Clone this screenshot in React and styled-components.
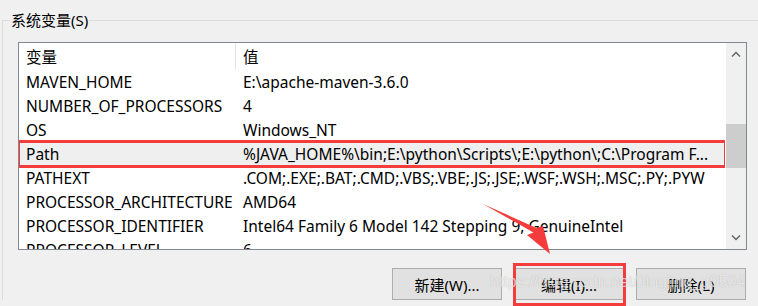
import React from 'react';
import styled, { createGlobalStyle } from 'styled-components';

const GlobalStyle = createGlobalStyle`
  html, body {
    margin: 0;
    padding: 0;
    background: #f0f0f0;
  }
  body {
    font-family: "Noto Sans", "Noto Sans CJK SC", sans-serif;
    color: #000;
  }
`;

const Window = styled.div`
  position: relative;
  width: 758px;
  height: 306px;
  overflow: hidden;
  background: #f0f0f0;
`;

const Group = styled.fieldset`
  margin: 10px 0 0 2px;
  width: 800px;
  padding: 0 0 0 15px;
  border: 1px solid #dcdcdc;
  border-bottom: none;
  box-sizing: border-box;

  legend {
    margin-left: -8px;
    padding: 0 1px;
    font-size: 15px;
    line-height: 20px;
    color: #000;
  }
`;

const ListBox = styled.div`
  margin-top: 12px;
  width: 729px;
  height: 208px;
  border: 1px solid #828790;
  box-sizing: border-box;
  background: #fff;
  display: flex;
`;

const Table = styled.div`
  flex: 1;
  overflow: hidden;
  display: flex;
  flex-direction: column;
`;

const Row = styled.div`
  display: grid;
  grid-template-columns: 217px 1fr;
  height: ${p => (p.$header ? 27 : 24)}px;
  flex-shrink: 0;
  align-items: center;
  font-size: 15.5px;
  white-space: nowrap;
  background: ${p => (p.$marked ? '#efefef' : 'transparent')};
  outline: ${p => (p.$marked ? '3px solid #f43c3c' : 'none')};
  outline-offset: -1px;
  position: relative;
  z-index: ${p => (p.$marked ? 1 : 0)};
`;

const Cell = styled.div`
  padding-left: 7px;
  height: 100%;
  display: flex;
  align-items: center;
  overflow: hidden;
  border-right: ${p => (p.$divider ? '1px solid #e5e5e5' : 'none')};
`;

const Scrollbar = styled.div`
  width: 20px;
  background: #f0f0f0;
  display: flex;
  flex-direction: column;
  align-items: center;
  border-left: 1px solid #fff;
`;

const Arrow = styled.div`
  height: 22px;
  display: flex;
  align-items: center;
  justify-content: center;
`;

const Track = styled.div`
  flex: 1;
  width: 100%;
`;

const Thumb = styled.div`
  margin-top: 59px;
  height: 44px;
  width: 100%;
  background: #cdcdcd;
`;

const Buttons = styled.div`
  width: 729px;
  display: flex;
  justify-content: flex-end;
  gap: 12px;
  padding: 18px 1px 0 0;
  box-sizing: border-box;
`;

const Button = styled.button`
  position: relative;
  width: 110px;
  height: 32px;
  background: #e1e1e1;
  border: 1px solid #adadad;
  font-family: "Noto Sans", "Noto Sans CJK SC", sans-serif;
  font-size: 15px;
  color: #000;
  padding: 0;

  ${p => p.$marked && `
    &::after {
      content: '';
      position: absolute;
      top: -6px;
      left: -2px;
      right: -3px;
      bottom: -7px;
      border: 3px solid #f43c3c;
    }
  `}
`;

const Pointer = styled.svg`
  position: absolute;
  left: 478px;
  top: 200px;
`;

const Watermark = styled.div`
  position: absolute;
  left: 490px;
  top: 273px;
  font-family: "Liberation Sans", Arial, sans-serif;
  font-size: 16px;
  color: rgba(255, 255, 255, 0.7);
  text-shadow: 0 0 1px rgba(0, 0, 0, 0.25);
  white-space: nowrap;
`;

const rows = [
  ['MAVEN_HOME', 'E:\\apache-maven-3.6.0'],
  ['NUMBER_OF_PROCESSORS', '4'],
  ['OS', 'Windows_NT'],
  ['Path', '%JAVA_HOME%\\bin;E:\\python\\Scripts\\;E:\\python\\;C:\\Program F...'],
  ['PATHEXT', '.COM;.EXE;.BAT;.CMD;.VBS;.VBE;.JS;.JSE;.WSF;.WSH;.MSC;.PY;.PYW'],
  ['PROCESSOR_ARCHITECTURE', 'AMD64'],
  ['PROCESSOR_IDENTIFIER', 'Intel64 Family 6 Model 142 Stepping 9, GenuineIntel'],
  ['PROCESSOR_LEVEL', '6'],
];

export default function App() {
  return (
    <>
      <GlobalStyle />
      <Window>
        <Group>
          <legend>系统变量(S)</legend>
          <ListBox>
            <Table>
              <Row $header>
                <Cell $divider>变量</Cell>
                <Cell>值</Cell>
              </Row>
              {rows.map(([name, value]) => (
                <Row key={name} $marked={name === 'Path'}>
                  <Cell>{name}</Cell>
                  <Cell>{value}</Cell>
                </Row>
              ))}
            </Table>
            <Scrollbar>
              <Arrow>
                <svg width="10" height="6" viewBox="0 0 10 6">
                  <path d="M1 5.5 L5 1.5 L9 5.5" fill="none" stroke="#606060" strokeWidth="1.4" />
                </svg>
              </Arrow>
              <Track>
                <Thumb />
              </Track>
              <Arrow>
                <svg width="10" height="6" viewBox="0 0 10 6">
                  <path d="M1 0.5 L5 4.5 L9 0.5" fill="none" stroke="#606060" strokeWidth="1.4" />
                </svg>
              </Arrow>
            </Scrollbar>
          </ListBox>
          <Buttons>
            <Button>新建(W)...</Button>
            <Button $marked>编辑(I)...</Button>
            <Button>删除(L)</Button>
          </Buttons>
        </Group>
        <Pointer width="80" height="60" viewBox="0 0 80 60">
          <path d="M5 4 L58.5 28 L65 26 L72 54 L49 35 L55.5 32.5 Z" fill="#f43c3c" />
        </Pointer>
        <Watermark>https://blog.csdn.net/Jingjing_g0504</Watermark>
      </Window>
    </>
  );
}
